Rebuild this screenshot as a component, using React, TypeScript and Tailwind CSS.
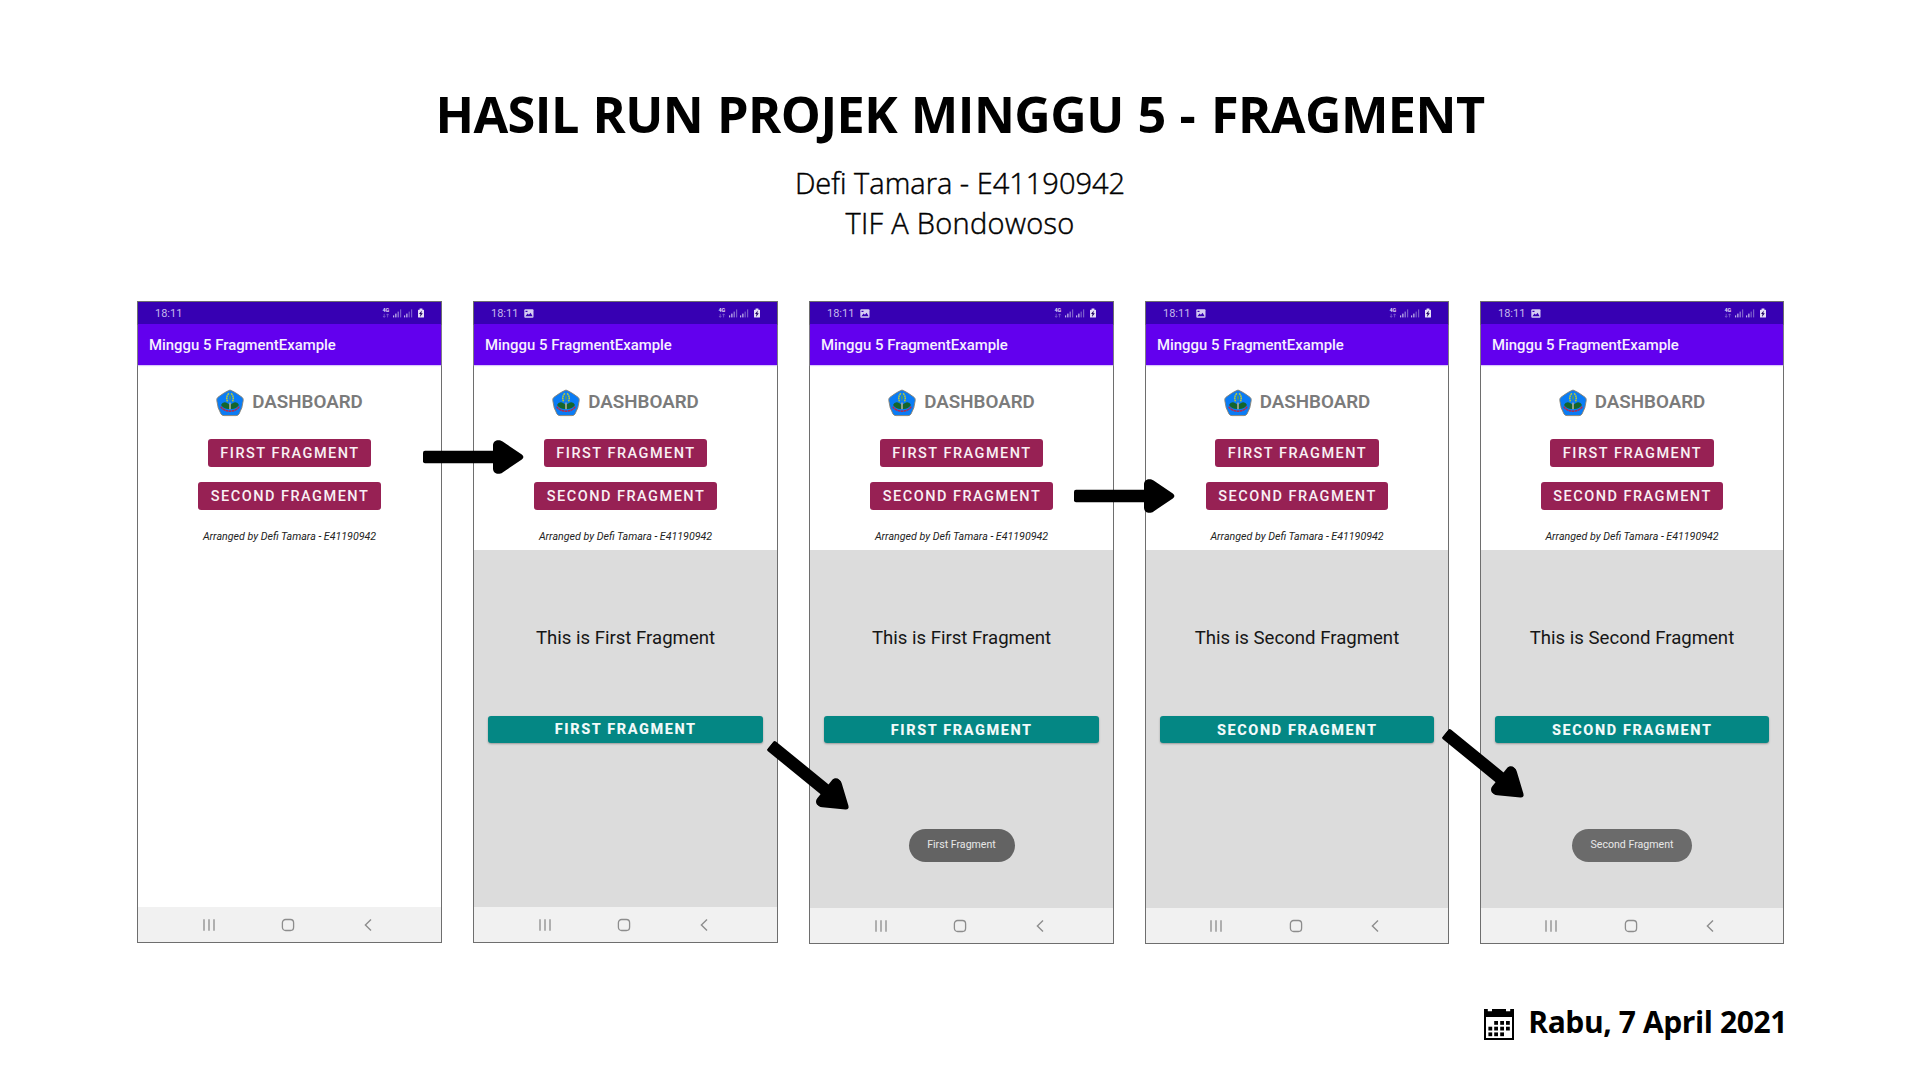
type Screen = {
  photo: boolean;
  fragment?: "First" | "Second";
  toast?: boolean;
  width: string;
  height: string;
  shift?: string;
};

const screens: Screen[] = [
  { photo: false, width: "w-[305px]", height: "h-[642px]" },
  { photo: true, fragment: "First", width: "w-[305px]", height: "h-[642px]" },
  { photo: true, fragment: "First", toast: true, width: "w-[305px]", height: "h-[643px]", shift: "pt-[0.7px]" },
  { photo: true, fragment: "Second", width: "w-[304px]", height: "h-[643px]", shift: "pt-[0.7px]" },
  { photo: true, fragment: "Second", toast: true, width: "w-[304px]", height: "h-[643px]", shift: "pt-[0.7px]" },
];

function StatusIcons() {
  return (
    <svg className="mb-px h-3 w-11" viewBox="0 0 44 12" fill="#c3b3ec">
      <text x="0.4" y="5.2" fontSize="5.4" fontWeight="700" fontFamily="Roboto, sans-serif" fill="#e0d8f6">4G</text>
      <path d="M2.2 6.8v3.4M1 9l1.2 1.4L3.4 9M5.6 10.4V7M4.4 8.2l1.2-1.4 1.2 1.4" fill="none" stroke="#8a6cd4" strokeWidth="0.7" />
      <g>
        <rect x="11" y="8.4" width="1.2" height="2" />
        <rect x="13.2" y="6.6" width="1.3" height="3.8" />
        <rect x="15.6" y="4.6" width="1.2" height="5.8" fill="#9c84dc" />
        <rect x="18" y="2.4" width="1.2" height="8" fill="#7b5ccb" />
      </g>
      <g>
        <rect x="22" y="8.4" width="1.2" height="2" />
        <rect x="24.2" y="6.6" width="1.3" height="3.8" />
        <rect x="26.6" y="4.6" width="1.2" height="5.8" fill="#7b5ccb" />
        <rect x="29" y="2.4" width="1.2" height="8" fill="#7b5ccb" />
      </g>
      <path d="M37.6 1.6h2.8v1.1h1a.6.6 0 0 1 .6.6v6.6a.6.6 0 0 1-.6.6h-4.8a.6.6 0 0 1-.6-.6V3.3a.6.6 0 0 1 .6-.6h1z" fill="#e6e0f6" />
      <path d="M39.8 3.4 37 7h1.5l-.5 2.9 2.8-3.7h-1.5z" fill="#1c0060" />
    </svg>
  );
}

function PhotoIcon() {
  return (
    <svg className="ml-[6px] h-[9px] w-[10px]" viewBox="0 0 10 9">
      <rect x="0.3" y="0.3" width="9.2" height="8.4" rx="1" fill="#d6ccf2" />
      <path d="M1.4 7.2 3.6 4.6l1.3 1.2 1.7-2.1 2 3.5z" fill="#3700b3" />
      <rect x="1.5" y="1.8" width="2" height="1.2" fill="#3700b3" />
    </svg>
  );
}

function Crest() {
  return (
    <svg className="h-[28px] w-[28px]" viewBox="0 0 28 28">
      <path
        d="M14 1 Q19 2.8 26 8.2 Q27.6 9.6 27.2 11.6 Q26.6 19 23 25 Q22 26.6 20 26.6 L8 26.6 Q6 26.6 5 25 Q1.4 19 .8 11.6 Q.4 9.6 2 8.2 Q9 2.8 14 1Z"
        fill="#0a7cf5"
        stroke="#8a8272"
        strokeWidth="0.9"
      />
      <path d="M12.8 4.2Q9.4 8.4 11.6 12.4M15.2 4.2Q18.6 8.4 16.4 12.4" fill="none" stroke="#b6c93a" strokeWidth="1.6" strokeDasharray="1.8 .5" />
      <path d="M14 5.4l1 3-1 4-1-4z" fill="#5fa04a" />
      <path d="M13.6 20Q8 20.4 5 16Q6.4 12.6 10 13.4Q12.8 14.4 13.6 16zM14.4 20Q20 20.4 23 16Q21.6 12.6 18 13.4Q15.2 14.4 14.4 16z" fill="#14652c" />
      <path d="M4.8 17.6Q7.4 22 14 22.2Q20.6 22 23.2 17.6" fill="none" stroke="#b52a4c" strokeWidth="1.5" strokeDasharray="2.6 .5" />
      <rect x="13.3" y="13.6" width="1.4" height="6.6" fill="#c9b48a" />
    </svg>
  );
}

function NavBar() {
  return (
    <div className="flex h-[35px] shrink-0 items-center justify-center gap-[63.5px] bg-[#f1f1f1] pr-[3px]">
      <svg className="size-4" viewBox="0 0 16 16" stroke="#8d8d8d" strokeWidth="1.3">
        <path d="M3 2.3v11.4M8 2.3v11.4M13 2.3v11.4" />
      </svg>
      <svg className="size-4" viewBox="0 0 16 16" fill="none" stroke="#8d8d8d" strokeWidth="1.3">
        <rect x="2.4" y="2.5" width="11.2" height="11" rx="3.2" />
      </svg>
      <svg className="size-4" viewBox="0 0 16 16" fill="none" stroke="#8d8d8d" strokeWidth="1.4">
        <path d="M11 2.6 5.4 8l5.6 5.4" />
      </svg>
    </div>
  );
}

function Phone({ photo, fragment, toast, width, height, shift = "" }: Screen) {
  const label = fragment === "First" ? "FIRST FRAGMENT" : "SECOND FRAGMENT";
  return (
    <div className={`relative flex shrink-0 flex-col border border-[#6e6e6e] bg-white font-[Roboto,sans-serif] ${width} ${height}`}>
      <div className="flex h-[22px] shrink-0 items-center justify-between bg-[#3700b3] pr-[15px] pl-[17px]">
        <div className="flex items-center">
          <span className="text-[11px] leading-none text-[#c6b8ec]">18:11</span>
          {photo && <PhotoIcon />}
        </div>
        <StatusIcons />
      </div>
      <div className="flex h-[41px] shrink-0 items-center bg-[#6200ee] pt-[2px] pl-[11px] text-[14.9px] font-medium text-[#f6f0ff] shadow-[0_1px_1px_#d9c6fa]">
        Minggu 5 FragmentExample
      </div>
      <div className="flex h-[185px] shrink-0 flex-col items-center pt-6">
        <div className="flex h-7 gap-2">
          <Crest />
          <span className="text-[18.8px] leading-[26px] font-semibold text-[#7b7b7b]">DASHBOARD</span>
        </div>
        <div className="mt-[22px] flex h-[27.5px] w-[163.5px] shrink-0 items-center justify-center rounded-[3px] bg-[#972154] pt-[1.5px] pl-px text-[14.5px] font-medium tracking-[1.5px] text-[#f9f0f4]">
          FIRST FRAGMENT
        </div>
        <div className="mt-[15.5px] flex h-[27.5px] w-[182.5px] shrink-0 items-center justify-center rounded-[3px] bg-[#972154] pt-[1.5px] pl-px text-[14.5px] font-medium tracking-[1.5px] text-[#f9f0f4]">
          SECOND FRAGMENT
        </div>
        <p className="mt-[20.5px] text-[10.65px] leading-[14px] text-[#222222] italic">Arranged by Defi Tamara - E41190942</p>
      </div>
      <div className={`flex min-h-0 flex-1 flex-col ${fragment ? "bg-[#dcdcdc]" : "bg-white"} ${shift}`}>
        {fragment && (
          <>
            <p className="mt-[75.5px] text-center text-[18.6px] leading-6 text-[#161616]">This is {fragment} Fragment</p>
            <div className="mr-[14px] ml-[13.5px] mt-[66px] flex h-[27px] items-center justify-center rounded-[3px] bg-[#048784] pt-[1.5px] pl-px text-[14.5px] font-extrabold tracking-[1.6px] text-[#f2fafa] shadow-[0_1px_2px_rgba(0,0,0,0.3)]">
              {label}
            </div>
          </>
        )}
      </div>
      <NavBar />
      {toast && (
        <div
          className={`absolute bottom-[81.5px] left-1/2 flex h-[33px] -translate-x-1/2 items-center justify-center rounded-full text-[10.6px] text-[#e8e8e8] ${
            fragment === "First" ? "w-[106px] bg-[#636363]" : "w-[120px] bg-[#6b6b6b]"
          }`}
        >
          {fragment} Fragment
        </div>
      )}
    </div>
  );
}

function Arrow({ className }: { className: string }) {
  return (
    <svg className={`absolute h-[34px] w-[101px] ${className}`} viewBox="0 0 101 34">
      <rect x="0" y="10.7" width="74" height="12.6" rx="2" />
      <path d="M70 5.4C70 .4 75.6 -1.4 79.6 1.6L98.8 14.6Q102 17 98.8 19.4L79.6 32.4C75.6 35.4 70 33.6 70 28.6Z" />
    </svg>
  );
}

function CalendarIcon() {
  const dots = [
    [10.2, 12], [16.2, 12], [22, 12],
    [4.4, 17.7], [10.2, 17.7], [16.2, 17.7], [22, 17.7],
    [4.4, 23.4], [10.2, 23.4], [16.2, 23.4],
  ];
  return (
    <svg className="mt-1 h-[31px] w-[30px]" viewBox="0 0 30 31">
      <path d="M0 0H3.8V2.2H8V0H22V2.2H26.2V0H30V31H0ZM2 8V29H28V8Z" fillRule="evenodd" />
      {dots.map(([x, y]) => (
        <rect key={`${x}-${y}`} x={x} y={y} width="3.8" height="3.8" />
      ))}
    </svg>
  );
}

export default function App() {
  return (
    <main className="relative flex h-[1080px] w-[1920px] flex-col overflow-hidden bg-white font-['Open_Sans',sans-serif] text-black">
      <header className="pt-[84px] text-center">
        <h1 className="text-[50.4px] leading-[60px] font-bold tracking-[-0.55px] [word-spacing:1.2px]">
          HASIL RUN PROJEK MINGGU 5 <span className="mr-[2px]">-</span> FRAGMENT
        </h1>
        <p className="mt-[19px] text-[29px] leading-10 font-light [-webkit-text-stroke:0.45px_black]">
          Defi Tamara - E41190942
          <br />
          <span className="tracking-[0.3px]">TIF A Bondowoso</span>
        </p>
      </header>
      <section className="mt-[58px] flex h-[643px] items-start gap-[31px] pl-[137px]">
        {screens.map((screen, i) => (
          <Phone key={i} {...screen} />
        ))}
      </section>
      <footer className="mt-[58px] flex h-10 items-center justify-end gap-[14px] pr-[133px]">
        <CalendarIcon />
        <span className="text-[30px] leading-10 font-bold tracking-[-0.4px]">Rabu, 7 April 2021</span>
      </footer>
      <Arrow className="top-[439.5px] left-[423px]" />
      <Arrow className="top-[479.2px] left-[1074px]" />
      <Arrow className="top-[760.2px] left-[759.3px] rotate-[39.2deg]" />
      <Arrow className="top-[748.2px] left-[1434.3px] rotate-[39.2deg]" />
    </main>
  );
}
